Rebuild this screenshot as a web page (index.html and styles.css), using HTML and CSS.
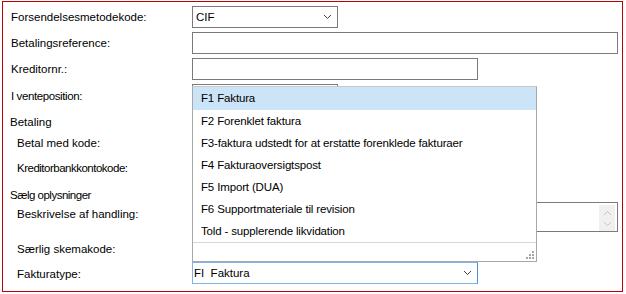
FILE: index.html
```html
<!DOCTYPE html>
<html lang="da">
<head>
    <meta charset="UTF-8">
    <title>Fakturaoplysninger</title>
    <link rel="stylesheet" href="styles.css">
</head>
<body>
<div class="form">
    <div class="row r1">
        <label class="lbl">Forsendelsesmetodekode:</label>
        <div class="select w146">
            <span>CIF</span>
            <svg class="chev" width="9" height="6" viewBox="0 0 9 6"><path d="M1 1 L4.5 4.5 L8 1" fill="none" stroke="#444" stroke-width="1"/></svg>
        </div>
    </div>
    <div class="row r2">
        <label class="lbl">Betalingsreference:</label>
        <input class="text w426" type="text">
    </div>
    <div class="row r3">
        <label class="lbl">Kreditornr.:</label>
        <input class="text w286" type="text">
    </div>
    <div class="row r4">
        <label class="lbl low tight-s">I venteposition:</label>
        <div class="combo">
            <div class="select w146"></div>
            <ul class="dropdown">
                <li class="active">F1 Faktura</li>
                <li>F2 Forenklet faktura</li>
                <li>F3-faktura udstedt for at erstatte forenklede fakturaer</li>
                <li>F4 Fakturaoversigtspost</li>
                <li>F5 Import (DUA)</li>
                <li>F6 Supportmateriale til revision</li>
                <li>Told - supplerende likvidation</li>
                <li class="grip-row">
                    <svg class="grip" width="8" height="8" viewBox="0 0 8 8" fill="#a8a8a8">
                        <rect x="6" y="0" width="2" height="2"/>
                        <rect x="3" y="3" width="2" height="2"/><rect x="6" y="3" width="2" height="2"/>
                        <rect x="0" y="6" width="2" height="2"/><rect x="3" y="6" width="2" height="2"/><rect x="6" y="6" width="2" height="2"/>
                    </svg>
                </li>
            </ul>
        </div>
    </div>
    <div class="row r5">
        <span class="group">Betaling</span>
    </div>
    <div class="row r6">
        <label class="lbl sub">Betal med kode:</label>
    </div>
    <div class="row r7">
        <label class="lbl sub tight-m">Kreditorbankkontokode:</label>
    </div>
    <div class="row r8">
        <span class="group tight-m">Sælg oplysninger</span>
    </div>
    <div class="row r9">
        <label class="lbl sub top">Beskrivelse af handling:</label>
        <div class="memo w426">
            <div class="scroll">
                <svg width="9" height="6" viewBox="0 0 9 6"><path d="M1 5 L4.5 1.5 L8 5" fill="none" stroke="#c4c4c4" stroke-width="1"/></svg>
                <svg width="9" height="6" viewBox="0 0 9 6"><path d="M1 1 L4.5 4.5 L8 1" fill="none" stroke="#c4c4c4" stroke-width="1"/></svg>
            </div>
        </div>
    </div>
    <div class="row r10">
        <label class="lbl sub low3">Særlig skemakode:</label>
    </div>
    <div class="row r11">
        <label class="lbl sub">Fakturatype:</label>
        <div class="select w286 focus">
            <span class="val">FI&nbsp; Faktura</span>
            <svg class="chev" width="9" height="6" viewBox="0 0 9 6"><path d="M1 1 L4.5 4.5 L8 1" fill="none" stroke="#444" stroke-width="1"/></svg>
        </div>
    </div>
</div>
</body>
</html>
```

FILE: styles.css
```css
/* Form panel with dropdown open */
body {
    margin: 0;
    background-color: #fff;
    font-family: "Liberation Sans", Arial, sans-serif;
    font-size: 11.5px;
    color: #000;
}
.form {
    position: relative;
    box-sizing: border-box;
    width: 621px;
    height: 291px;
    margin: 1px 0 0 2px;
    padding: 4px 0 0 8px;
    border: 1px solid #c00000;
}
.row {
    display: flex;
    align-items: center;
    height: 22px;
    margin-top: 4px;
}
.row.r1 { margin-top: 0; }
.row.r5 { height: 20px; }
.row.r6 { height: 20px; margin-top: 2px; }
.row.r8 { height: 18px; margin-top: 6px; }
.row.r9 { height: 30px; margin-top: 0; align-items: flex-start; }
.lbl {
    width: 181px;
    flex-shrink: 0;
    white-space: nowrap;
}
.lbl.sub {
    padding-left: 6px;
    padding-top: 2px;
    width: 175px;
}
.lbl.low {
    padding-top: 2px;
}
.lbl.sub.low3 {
    padding-top: 3px;
}
.lbl.sub.top {
    padding-top: 6px;
}
.group {
    margin-left: -1px;
    padding-top: 3px;
    white-space: nowrap;
}
.tight-s { letter-spacing: -0.4px; }
.tight-m { letter-spacing: -0.5px; }
.select, .text, .memo {
    box-sizing: border-box;
    height: 22px;
    border: 1px solid #7a7a7a;
    background-color: #fff;
}
.select {
    display: flex;
    align-items: center;
    justify-content: space-between;
    padding: 0 5px 0 3px;
}
.select.focus {
    border-color: #7eb4ea;
    border-right-color: #4a90d9;
    padding-left: 1px;
}
.chev {
    display: block;
}
.text {
    padding: 0 3px;
    font: inherit;
    outline: none;
}
.memo {
    height: 30px;
    position: relative;
}
.scroll {
    position: absolute;
    right: 2px;
    top: 2px;
    width: 16px;
    height: 26px;
    background-color: #f0f0f0;
    display: flex;
    flex-direction: column;
    align-items: center;
    justify-content: space-around;
    padding: 2px 0;
    box-sizing: border-box;
}
.w146 { width: 146px; }
.w286 { width: 286px; }
.w426 { width: 426px; }
.combo {
    position: relative;
    align-self: flex-start;
}
.dropdown {
    position: absolute;
    z-index: 10;
    top: 2px;
    left: 0;
    box-sizing: border-box;
    width: 345px;
    height: 176px;
    margin: 0;
    padding: 0;
    list-style: none;
    background-color: #fff;
    border: 1px solid #a8a8a8;
    border-top-color: #c8c8c8;
    letter-spacing: -0.15px;
}
.dropdown li {
    height: 22px;
    line-height: 23px;
    padding-left: 8px;
    white-space: nowrap;
}
.dropdown li.active {
    height: 23px;
    line-height: 23px;
    background-color: #cce4f7;
}
.dropdown li.grip-row {
    position: relative;
    height: 18px;
    border-top: 1px solid #d6d6d6;
}
.grip {
    position: absolute;
    right: 2px;
    bottom: 2px;
}
```
